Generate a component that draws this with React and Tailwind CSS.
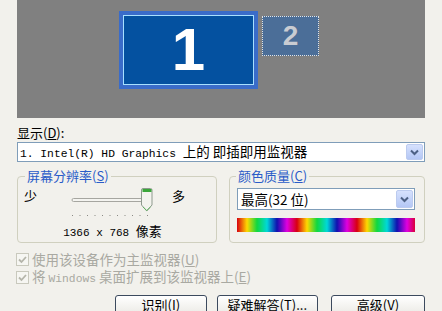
import React from 'react';

function Chevron() {
  return (
    <svg width="9" height="7" viewBox="0 0 9 7">
      <path d="M1 1.5 L4.5 5 L8 1.5" fill="none" stroke="#4d6185" strokeWidth="2" />
    </svg>
  );
}

function ArrowButton() {
  return (
    <div className="m-[1px] w-[17px] self-stretch rounded-[2px] border border-[#bccbef] bg-linear-to-b from-[#d6e1fd] to-[#b4c7f5] flex items-center justify-center">
      <Chevron />
    </div>
  );
}

function CheckBox() {
  return (
    <div className="w-[13px] h-[13px] border border-[#c9c9bd] bg-[#f6f6f2] flex items-center justify-center">
      <svg width="9" height="9" viewBox="0 0 9 9">
        <path d="M1 4.5 L3.5 7 L8 2" fill="none" stroke="#b5b5aa" strokeWidth="1.8" />
      </svg>
    </div>
  );
}

function Slider() {
  const dots = [];
  for (let i = 0; i < 11; i++) dots.push(4 + i * 7.5);
  return (
    <svg width="90" height="34" viewBox="0 0 90 34">
      <rect x="4" y="12.5" width="78" height="3" rx="1.5" fill="#f4f4f0" stroke="#a6a6a0" />
      {dots.map((x, i) => (
        <rect key={i} x={x} y="29" width="1" height="1" fill="#8a8a84" />
      ))}
      <path d="M73.5 4 Q73.5 2.5 75 2.5 H82.5 Q84 2.5 84 4 V19 L78.75 25 L73.5 19 Z" fill="#f3f3ee" stroke="#8e9a8e" />
      <rect x="74.5" y="3" width="9" height="3" fill="#3aa63a" />
      <path d="M75 21 L78.75 24.5 L82.5 21" fill="none" stroke="#5fb35f" strokeWidth="1" />
    </svg>
  );
}

export default function App() {
  return (
    <div className="w-[442px] h-[311px] overflow-hidden bg-[#f2f1ec] font-['Noto_Sans_CJK_SC',sans-serif] text-[13px] text-black">
      {/* monitor arrangement */}
      <div className="relative mx-[17px] h-[118px] bg-[#808080]">
        <div className="absolute left-[102px] top-[11px] w-[139px] h-[78px] bg-[#3a6cc9] p-[4px]">
          <div className="w-full h-full border border-[#a8e0ff] bg-[#0451a0] flex items-center justify-center">
            <span className="font-['Liberation_Sans',Arial,sans-serif] font-bold text-[60px] leading-none text-white">1</span>
          </div>
        </div>
        <div className="absolute left-[245px] top-[16px] w-[57px] h-[40px] border border-dotted border-[#e4e4e4] bg-[#4b6e98] flex items-center justify-center">
          <span className="font-['Liberation_Sans',Arial,sans-serif] font-bold text-[28px] leading-none text-[#c9ccd2]">2</span>
        </div>
      </div>

      <div className="px-[17px]">
        <div className="mt-[7px] leading-[16px]">
          显示(<span className="underline">D</span>):
        </div>
        <div className="mt-[1px] h-[20px] border border-[#7f9db9] bg-white flex items-center">
          <div className="flex-1 pl-[2px] flex items-baseline leading-[16px] whitespace-pre">
            <span className="font-['Liberation_Mono',monospace] text-[11.3px]">1. Intel(R) HD Graphics </span>
            <span className="text-[13.5px]">上的 即插即用监视器</span>
          </div>
          <ArrowButton />
        </div>

        <div className="mt-[6px] flex gap-[12px]">
          <fieldset className="w-[200px] h-[75px] border border-[#d0d0bf] rounded-[4px] px-[6px]">
            <legend className="ml-[1px] px-[2px] leading-[16px] text-[#2a5cc8]">
              屏幕分辨率(<span className="underline">S</span>)
            </legend>
            <div className="mt-[2px] h-[34px] flex items-start">
              <span className="mt-[2px] leading-[16px]">少</span>
              <div className="ml-[31px]">
                <Slider />
              </div>
              <span className="ml-[14px] mt-[2px] leading-[16px]">多</span>
            </div>
            <div className="mt-[3px] pr-[9px] text-center leading-[16px] whitespace-pre">
              <span className="font-['Liberation_Mono',monospace] text-[11px]">1366 x 768 </span>
              <span>像素</span>
            </div>
          </fieldset>

          <fieldset className="w-[196px] h-[75px] border border-[#d0d0bf] rounded-[4px] pl-[7px] pr-[9px]">
            <legend className="ml-[-1px] px-[2px] leading-[16px] text-[#2a5cc8]">
              颜色质量(<span className="underline">C</span>)
            </legend>
            <div className="mt-[4px] h-[22px] border border-[#7f9db9] bg-white flex items-center">
              <div className="flex-1 pl-[3px] leading-[16px] text-[13.5px]">最高(32 位)</div>
              <ArrowButton />
            </div>
            <div className="mt-[8px] h-[14px] bg-[repeating-linear-gradient(90deg,#d80010_0px,#ffd800_10px,#10d840_20px,#00d8d8_30px,#1010b0_40px,#e000e0_50px,#d80010_60px)]" />
          </fieldset>
        </div>

        <div className="mt-[7px] text-[#a9a9a2] text-[13.5px]">
          <div className="h-[18px] flex items-center gap-[3px] ml-[-1px]">
            <CheckBox />
            <span className="leading-[16px]">使用该设备作为主监视器(<span className="underline">U</span>)</span>
          </div>
          <div className="h-[18px] flex items-center gap-[3px] ml-[-1px]">
            <CheckBox />
            <span className="leading-[16px] whitespace-pre">
              将 <span className="font-['Liberation_Mono',monospace] text-[11.3px]">Windows</span> 桌面扩展到该监视器上(<span className="underline">E</span>)
            </span>
          </div>
        </div>

        <div className="mt-[9px] flex text-[13px]">
          <button className="ml-[98px] w-[94px] h-[23px] rounded-[3px] border border-[#3c4a5e] bg-linear-to-b from-white to-[#e8e7e1] pt-[1px] leading-[16px] flex justify-center">
            识别(<span className="underline">I</span>)
          </button>
          <button className="ml-[10px] w-[104px] h-[23px] rounded-[3px] border border-[#3c4a5e] bg-linear-to-b from-white to-[#e8e7e1] pt-[1px] leading-[16px] flex justify-center">
            疑难解答(<span className="underline">T</span>)...
          </button>
          <button className="ml-[13px] w-[94px] h-[23px] shrink-0 rounded-[3px] border border-[#3c4a5e] bg-linear-to-b from-white to-[#e8e7e1] pt-[1px] leading-[16px] flex justify-center">
            高级(<span className="underline">V</span>)
          </button>
        </div>
      </div>
    </div>
  );
}
